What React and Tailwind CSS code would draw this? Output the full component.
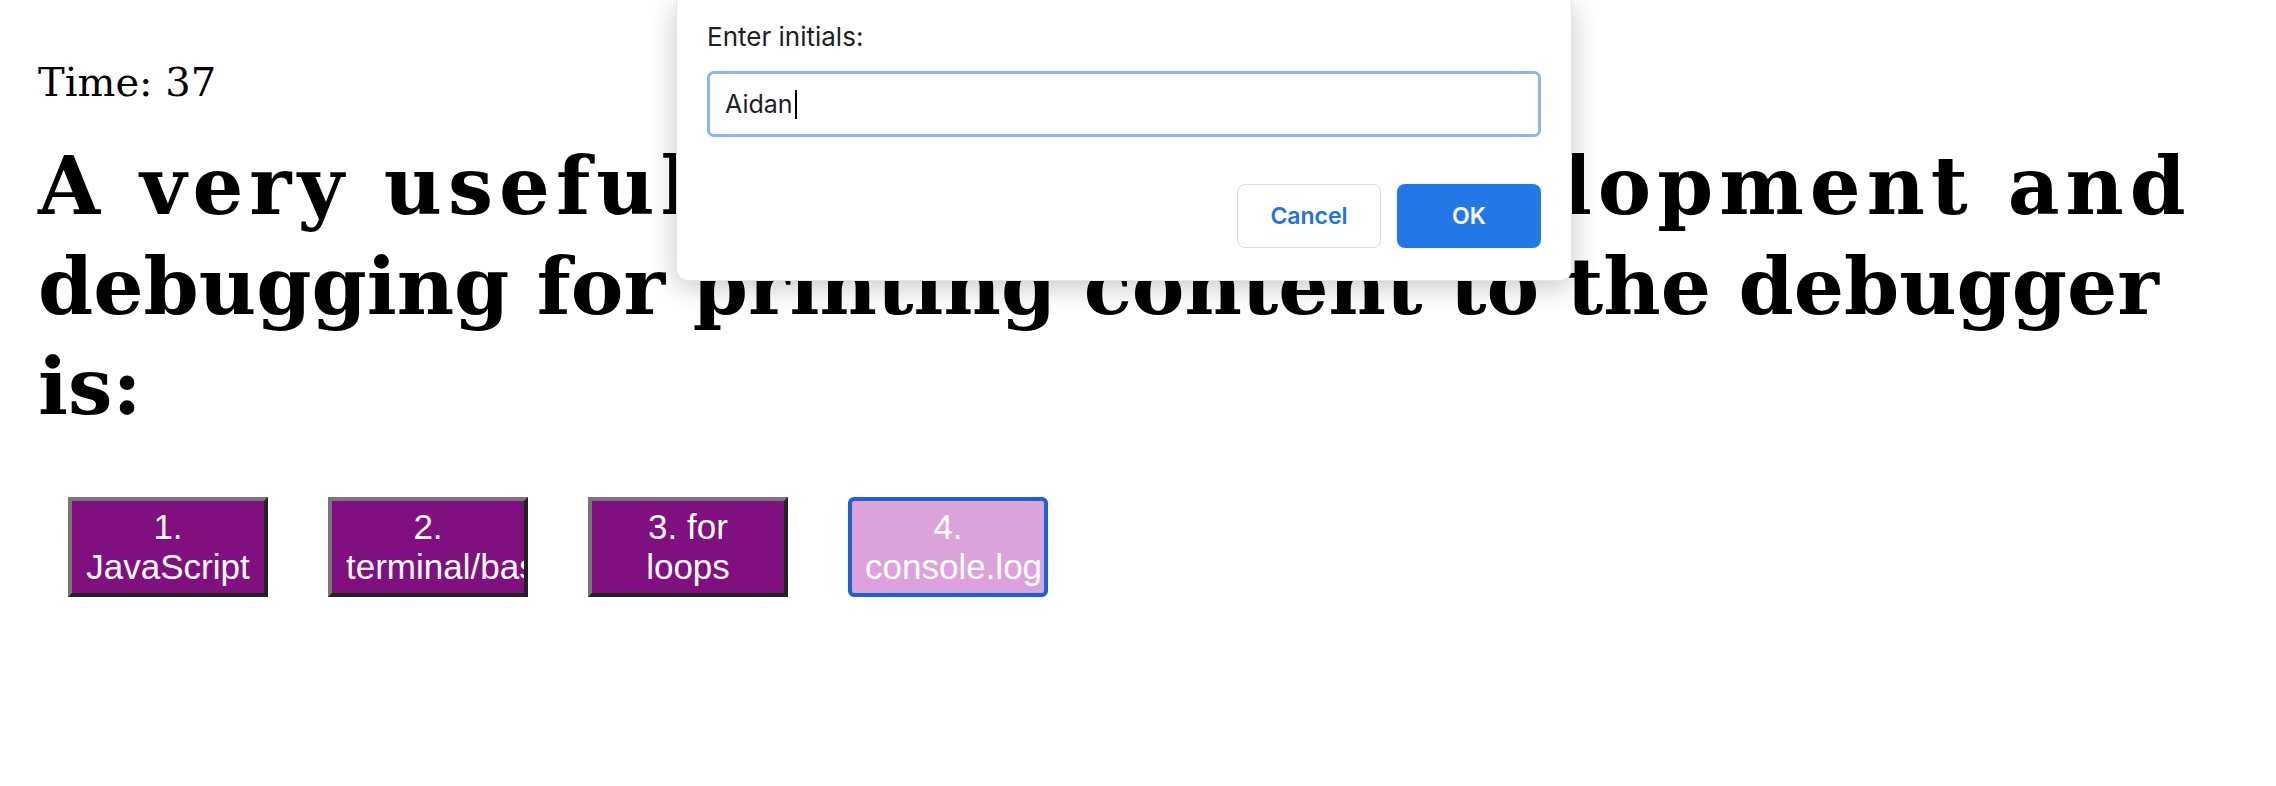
import React from "react";

const answers = [
  { label: "1. JavaScript" },
  { label: "2. terminal/bash" },
  { label: "3. for loops" },
  { label: "4. console.log", focused: true },
];

// pergunta do quiz com o prompt do navegador por cima
const App = () => {
  return (
    <div className="relative min-h-screen bg-white text-black overflow-hidden">
      <div className="pl-[38px] pt-[58px]">
        <p className="font-['DejaVu_Serif',serif] text-[40px] leading-[48px]">Time: 37</p>
        <h1 className="mt-[30px] font-['DejaVu_Serif',serif] font-bold text-[79px] leading-[100px] whitespace-nowrap">
          <span className="text-[80px] tracking-[6px]">A very useful tool during development and</span>
          <br />
          debugging for printing content to the debugger
          <br />
          is:
        </h1>

        <div className="mt-[60px] flex gap-[60px] pl-[30px]">
          {answers.map((a) =>
            a.focused ? (
              <button
                key={a.label}
                className="w-[200px] h-[100px] shrink-0 overflow-hidden px-[13px] bg-[#dca2db] border-4 border-[#1a62d3] rounded-[6px] text-white text-center font-['Liberation_Sans',Arial,sans-serif] text-[35px] leading-[40px]"
              >
                {a.label}
              </button>
            ) : (
              <button
                key={a.label}
                className="w-[200px] h-[100px] shrink-0 overflow-hidden px-[14px] bg-[#800f7f] border-4 border-t-[#777777] border-l-[#777777] border-b-[#222222] border-r-[#222222] text-white text-center font-['Liberation_Sans',Arial,sans-serif] text-[35px] leading-[40px]"
              >
                {a.label}
              </button>
            )
          )}
        </div>
      </div>

      <div className="absolute top-0 left-[676px] w-[896px] bg-white rounded-b-[12px] border border-t-0 border-black/10 shadow-[0_6px_28px_rgba(0,0,0,0.22)] px-[30px] pt-[22px] pb-[32px] font-['Inter','Roboto',sans-serif]">
        <p className="text-[26px] leading-[30px] text-[#202124]">Enter initials:</p>
        <div className="mt-[19px] h-[66px] border-[3px] border-[#8ab4f8] rounded-[7px] flex items-center pl-[15px]">
          <span className="text-[25px] leading-[28px] text-[#202124]">Aidan</span>
          <span className="ml-[2px] w-[2px] h-[29px] bg-black"></span>
        </div>
        <div className="mt-[47px] flex justify-end gap-[16px]">
          <button className="w-[144px] h-[64px] rounded-[8px] border border-[#dadce0] bg-white text-[#1a73e8] text-[23px] font-semibold">
            Cancel
          </button>
          <button className="w-[144px] h-[64px] rounded-[8px] bg-[#2478e5] text-white text-[23px] font-semibold">
            OK
          </button>
        </div>
      </div>
    </div>
  );
};

export default App;
